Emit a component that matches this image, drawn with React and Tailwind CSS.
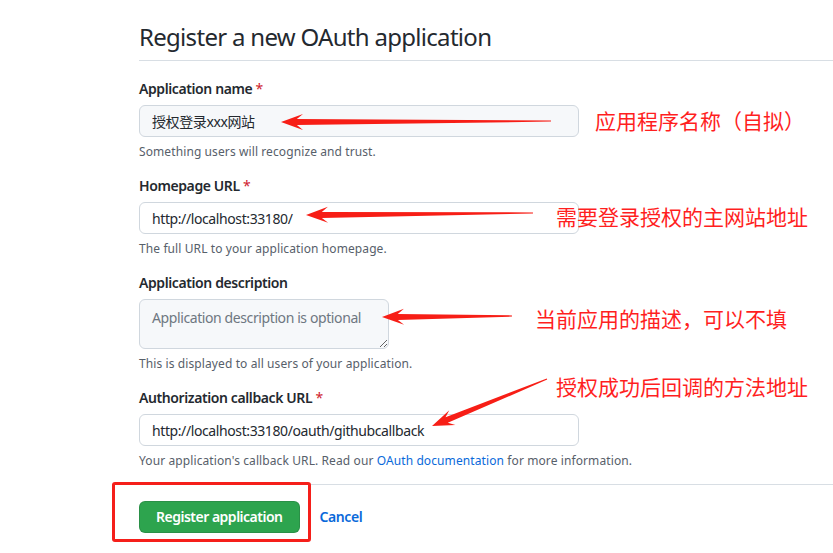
import React from 'react';

// tapered annotation arrow: thin tail, swept head
function arrowPoints(x1, y1, x2, y2, head = 22, wing = 8, neck = 3) {
  const dx = x2 - x1;
  const dy = y2 - y1;
  const len = Math.hypot(dx, dy);
  const ux = dx / len;
  const uy = dy / len;
  const nx = -uy;
  const ny = ux;
  const at = (back, off) => [x2 - ux * back + nx * off, y2 - uy * back + ny * off];
  const pts = [
    [x2, y2],
    at(head, wing),
    at(head * 0.72, neck),
    [x1 + nx * 0.6, y1 + ny * 0.6],
    [x1 - nx * 0.6, y1 - ny * 0.6],
    at(head * 0.72, -neck),
    at(head, -wing),
  ];
  return pts.map((p) => p.map((v) => v.toFixed(1)).join(',')).join(' ');
}

const arrows = [
  { from: [551, 121], to: [281, 122] },
  { from: [533, 213], to: [306, 215] },
  { from: [512, 316], to: [382, 317] },
  { from: [547, 379], to: [432, 426] },
];

const notes = [
  { text: '应用程序名称（自拟）', cls: 'left-[595px] top-[106px]' },
  { text: '需要登录授权的主网站地址', cls: 'left-[556px] top-[202px]' },
  { text: '当前应用的描述，可以不填', cls: 'left-[535px] top-[304px]' },
  { text: '授权成功后回调的方法地址', cls: 'left-[556px] top-[372px]' },
];

function Label({ children, required }) {
  return (
    <label className="block text-sm leading-5 font-semibold text-[#24292f]">
      {children}
      {required && <span className="text-[#cf222e] font-normal"> *</span>}
    </label>
  );
}

function Note({ children }) {
  return <p className="mt-[6px] text-xs leading-[18px] tracking-[0.1px] text-[#57606a]">{children}</p>;
}

export default function App() {
  return (
    <div className="relative w-[833px] h-[553px] overflow-hidden bg-white tracking-[-0.4px] font-['Noto_Sans','Noto_Sans_CJK_SC',sans-serif]">
      <div className="pl-[139px] pt-[19px]">
        <h1 className="text-2xl leading-9 font-normal tracking-[-0.7px] text-[#24292f] pb-[5px] border-b border-[#d8dee4]">
          Register a new OAuth application
        </h1>

        <form className="pt-[18px]">
          <div className="mb-[15px]">
            <Label required>Application name</Label>
            <input
              readOnly
              defaultValue="授权登录xxx网站"
              className="mt-[6px] block w-[440px] h-8 px-3 text-sm text-[#24292f] bg-[#f6f8fa] border border-[#d0d7de] rounded-md outline-none"
            />
            <Note>Something users will recognize and trust.</Note>
          </div>

          <div className="mb-[15px]">
            <Label required>Homepage URL</Label>
            <input
              readOnly
              defaultValue="http://localhost:33180/"
              className="mt-[6px] block w-[440px] h-8 px-3 text-sm text-[#24292f] bg-white border border-[#d0d7de] rounded-md outline-none"
            />
            <Note>The full URL to your application homepage.</Note>
          </div>

          <div className="mb-[15px]">
            <Label>Application description</Label>
            <textarea
              readOnly
              placeholder="Application description is optional"
              className="mt-[6px] block w-[250px] h-[50px] px-3 py-[8px] text-sm leading-5 text-[#24292f] placeholder:text-[#6e7781] bg-[#f6f8fa] border border-[#d0d7de] rounded-md outline-none"
            />
            <Note>This is displayed to all users of your application.</Note>
          </div>

          <div className="pb-[14px] border-b border-[#d8dee4]">
            <Label required>Authorization callback URL</Label>
            <input
              readOnly
              defaultValue="http://localhost:33180/oauth/githubcallback"
              className="mt-[6px] block w-[440px] h-8 px-3 text-sm text-[#24292f] bg-white border border-[#d0d7de] rounded-md outline-none"
            />
            <Note>
              Your application's callback URL. Read our{' '}
              <a className="text-[#0969da]">OAuth documentation</a> for more information.
            </Note>
          </div>

          <div className="flex items-center gap-5 pt-4">
            <button
              type="button"
              className="h-8 px-4 text-sm font-semibold tracking-[-0.5px] text-white bg-[#2da44e] border border-[#1b1f24]/15 rounded-md"
            >
              Register application
            </button>
            <a className="text-sm font-semibold text-[#0969da]">Cancel</a>
          </div>
        </form>
      </div>

      {/* annotations drawn over the form */}
      <div className="absolute left-[112px] top-[482px] w-[199px] h-[60px] border-[3px] border-[#f51f1a] rounded-[3px]" />

      <svg className="absolute inset-0 pointer-events-none" width="833" height="553">
        {arrows.map((a, i) => (
          <polygon key={i} points={arrowPoints(a.from[0], a.from[1], a.to[0], a.to[1])} fill="#f71e16" />
        ))}
      </svg>

      {notes.map((n) => (
        <span
          key={n.text}
          className={`absolute ${n.cls} text-[21px] leading-7 tracking-normal whitespace-nowrap text-[#ff1f1f] font-['Noto_Sans_CJK_SC',sans-serif]`}
        >
          {n.text}
        </span>
      ))}
    </div>
  );
}
